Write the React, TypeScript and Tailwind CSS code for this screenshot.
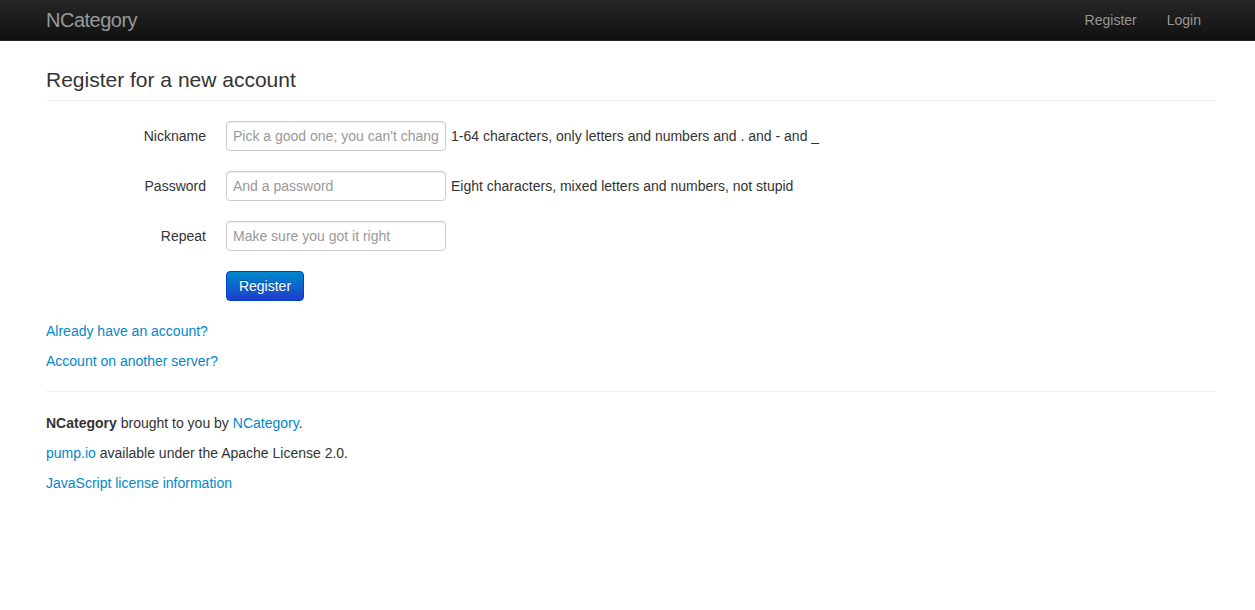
import React from "react";

const font = { fontFamily: '"Liberation Sans", Arial, sans-serif' };

function Row({ label, placeholder, help }: { label: string; placeholder: string; help?: string }) {
  return (
    <div className="flex items-center h-[30px] mb-[20px]">
      <label className="w-[160px] text-right text-[14px] leading-[20px] text-[#333]">{label}</label>
      <input
        type="text"
        placeholder={placeholder}
        className="ml-[20px] w-[220px] h-[30px] px-[6px] text-[14px] text-[#555] border border-[#ccc] rounded-[4px] shadow-[inset_0_1px_1px_rgba(0,0,0,0.075)] placeholder:text-[#999] outline-none bg-white"
      />
      {help && <span className="pl-[5px] text-[14px] leading-[20px] text-[#333]">{help}</span>}
    </div>
  );
}

export default function App() {
  return (
    <div className="min-h-[610px] bg-white text-[#333] text-[14px] leading-[20px]" style={font}>
      <div className="h-[41px] bg-gradient-to-b from-[#262626] to-[#111] border-b border-[#252525]">
        <div className="ml-[46px] w-[1170px] h-[40px] flex items-center justify-between">
          <span className="text-[20px] text-[#999] tracking-[-0.5px]">NCategory</span>
          <div className="flex text-[14px] text-[#999] [text-shadow:0_-1px_0_rgba(0,0,0,0.25)]">
            <a className="px-[15px] py-[10px]">Register</a>
            <a className="pl-[15px] pr-[15px] py-[10px]">Login</a>
          </div>
        </div>
      </div>

      <div className="ml-[46px] w-[1170px]">
        <div className="mt-[19px] h-[41px] border-b border-[#eee]">
          <h1 className="text-[21px] leading-[40px] font-normal text-[#333]">Register for a new account</h1>
        </div>

        <form className="mt-[20px]">
          <Row
            label="Nickname"
            placeholder="Pick a good one; you can't change it later"
            help="1-64 characters, only letters and numbers and . and - and _"
          />
          <Row label="Password" placeholder="And a password" help="Eight characters, mixed letters and numbers, not stupid" />
          <Row label="Repeat" placeholder="Make sure you got it right" />
          <div className="h-[30px] pl-[180px]">
            <button
              type="button"
              className="h-[30px] w-[78px] text-[14px] text-white rounded-[4px] border border-[#0044cc] bg-gradient-to-b from-[#0088cc] to-[#1f3acb] [text-shadow:0_-1px_0_rgba(0,0,0,0.25)]"
            >
              Register
            </button>
          </div>
        </form>

        <p className="mt-[20px] mb-[10px]">
          <a className="text-[#0088cc]">Already have an account?</a>
        </p>
        <p className="mb-[10px]">
          <a className="text-[#0088cc]">Account on another server?</a>
        </p>

        <hr className="mt-[20px] mb-[20px] border-t border-t-[#eee] border-b border-b-white" />

        <p className="mb-[10px]">
          <strong className="font-bold">NCategory</strong> brought to you by{" "}
          <a className="text-[#0088cc]">NCategory</a>.
        </p>
        <p className="mb-[10px]">
          <a className="text-[#0088cc]">pump.io</a> available under the Apache License 2.0.
        </p>
        <p className="mb-[10px]">
          <a className="text-[#0088cc]">JavaScript license information</a>
        </p>
      </div>
    </div>
  );
}
